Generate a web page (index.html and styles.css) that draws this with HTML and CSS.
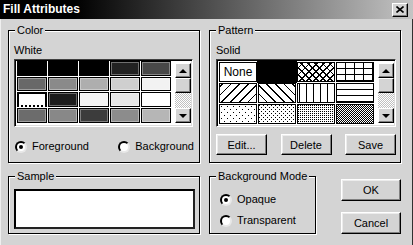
FILE: index.html
```html
<!DOCTYPE html>
<html lang="en">
<head>
    <meta charset="UTF-8">
    <meta name="viewport" content="width=device-width, initial-scale=1.0">
    <title>Fill Attributes</title>
    <link rel="stylesheet" href="styles.css">
</head>
<body>
    <div class="window">
        <div class="titlebar">
            <span class="title">Fill Attributes</span>
            <div class="close">
                <svg width="8" height="7" viewBox="0 0 8 7"><path d="M0.5 0.5 L7.5 6.5 M7.5 0.5 L0.5 6.5" stroke="#000" stroke-width="1.6" fill="none"/></svg>
            </div>
        </div>
        <div class="dialog">
            <div class="group color-group">
                <span class="group-title">Color</span>
                <div class="caption">White</div>
                <div class="listbox color-list">
                    <div class="swatches">
                        <div class="swatch dark" style="background:#000"></div>
                        <div class="swatch dark" style="background:#000"></div>
                        <div class="swatch dark" style="background:#000"></div>
                        <div class="swatch" style="background:#222"></div>
                        <div class="swatch" style="background:#484848"></div>
                        <div class="swatch" style="background:#686868"></div>
                        <div class="swatch" style="background:#8a8a8a"></div>
                        <div class="swatch" style="background:#aeaeae"></div>
                        <div class="swatch" style="background:#cfcfcf"></div>
                        <div class="swatch" style="background:#f2f2f2"></div>
                        <div class="swatch selected" style="background:#fff"></div>
                        <div class="swatch" style="background:#1c1c1c"></div>
                        <div class="swatch" style="background:#f4f4f4"></div>
                        <div class="swatch" style="background:#e6e6e6"></div>
                        <div class="swatch" style="background:#fff"></div>
                        <div class="swatch" style="background:#6c6c6c"></div>
                        <div class="swatch" style="background:#888"></div>
                        <div class="swatch" style="background:#3c3c3c"></div>
                        <div class="swatch" style="background:#8c8c8c"></div>
                        <div class="swatch" style="background:#b6b6b6"></div>
                    </div>
                    <div class="scrollbar">
                        <div class="sb-btn"><span class="arrow-up"></span></div>
                        <div class="sb-thumb"></div>
                        <div class="sb-track"></div>
                        <div class="sb-btn"><span class="arrow-down"></span></div>
                    </div>
                </div>
                <div class="radio-row">
                    <label class="radio"><span class="dot checked"></span>Foreground</label>
                    <label class="radio"><span class="dot"></span>Background</label>
                </div>
            </div>

            <div class="group pattern-group">
                <span class="group-title">Pattern</span>
                <div class="caption">Solid</div>
                <div class="listbox pattern-list">
                    <div class="patterns">
                        <div class="pat none">None</div>
                        <div class="pat solid"></div>
                        <div class="pat diamond"></div>
                        <div class="pat grid"></div>
                        <div class="pat fdiag"></div>
                        <div class="pat bdiag"></div>
                        <div class="pat vert"></div>
                        <div class="pat horiz"></div>
                        <div class="pat dots-sparse"></div>
                        <div class="pat dots-medium"></div>
                        <div class="pat dots-dense"></div>
                        <div class="pat checker"></div>
                    </div>
                    <div class="scrollbar">
                        <div class="sb-btn"><span class="arrow-up"></span></div>
                        <div class="sb-thumb"></div>
                        <div class="sb-track"></div>
                        <div class="sb-btn"><span class="arrow-down"></span></div>
                    </div>
                </div>
                <div class="pattern-buttons">
                    <button class="btn">Edit...</button>
                    <button class="btn">Delete</button>
                    <button class="btn">Save</button>
                </div>
            </div>

            <div class="group sample-group">
                <span class="group-title">Sample</span>
                <div class="sample-box"></div>
            </div>

            <div class="bottom-right">
                <div class="group mode-group">
                    <span class="group-title">Background Mode</span>
                    <label class="radio"><span class="dot checked"></span>Opaque</label>
                    <label class="radio"><span class="dot"></span>Transparent</label>
                </div>
                <div class="actions">
                    <button class="btn wide">OK</button>
                    <button class="btn wide">Cancel</button>
                </div>
            </div>
        </div>
    </div>
</body>
</html>
```

FILE: styles.css
```css
body {
    margin: 0;
    font-family: "Liberation Sans", Arial, sans-serif;
    font-size: 11px;
    line-height: 13px;
    color: #000;
}

.window {
    width: 413px;
    height: 245px;
    background-color: #d4d4d4;
    box-sizing: border-box;
    box-shadow: inset -1px 0 0 #303030, inset 1px 0 0 #efefef;
}

/* title bar */
.titlebar {
    height: 19px;
    display: flex;
    align-items: center;
    justify-content: space-between;
    padding: 0 5px 0 3px;
    background: linear-gradient(90deg, #000 0%, #000 18%, #c4c4c4 100%);
}

.title {
    color: #fff;
    font-weight: bold;
    font-size: 12px;
}

.close {
    width: 16px;
    height: 14px;
    box-sizing: border-box;
    background-color: #d4d4d4;
    border: 1px solid;
    border-color: #fff #000 #000 #fff;
    box-shadow: inset -1px -1px 0 #808080;
    display: flex;
    align-items: center;
    justify-content: center;
}

/* main layout */
.dialog {
    display: grid;
    grid-template-columns: 192px 193px;
    grid-template-rows: 133px 58px;
    column-gap: 8px;
    row-gap: 13px;
    padding: 11px 0 0 8px;
}

.group {
    position: relative;
    box-sizing: border-box;
    border: 1px solid #000;
    box-shadow: inset 1px 1px 0 #fff, 1px 1px 0 #fff;
}

.group-title {
    position: absolute;
    top: -7px;
    left: 6px;
    padding: 0 2px;
    background-color: #d4d4d4;
}

.caption {
    height: 13px;
}

.color-group {
    padding: 13px 0 0 5px;
}

.pattern-group {
    margin-left: 1px;
    padding: 13px 0 0 6px;
}

/* list boxes */
.listbox {
    box-sizing: border-box;
    height: 68px;
    margin-top: 2px;
    display: flex;
    background-color: #fff;
    border: 1px solid;
    border-color: #404040 #fff #fff #404040;
    box-shadow: inset 1px 1px 0 #000, inset -1px -1px 0 #dcdcdc;
    padding: 1px 1px 1px 2px;
}

.color-list {
    width: 179px;
}

.pattern-list {
    width: 180px;
}

.swatches {
    display: grid;
    grid-template-columns: repeat(5, 30px);
    grid-template-rows: 15px 14px 15px 15px;
    gap: 1px;
    align-content: start;
}

.swatch {
    box-sizing: border-box;
    border: 1px solid #000;
    box-shadow: inset 0 0 0 1px rgba(255, 255, 255, 0.35);
}

.swatch.dark {
    box-shadow: none;
}

.swatch.selected {
    border: 2px solid #000;
    border-bottom: 2px dotted #000;
    box-shadow: none;
}

.patterns {
    display: grid;
    grid-template-columns: repeat(4, 38px);
    grid-auto-rows: 20px;
    gap: 1px;
    padding-top: 1px;
    align-content: start;
}

.pat {
    box-sizing: border-box;
    border: 1px solid #000;
    background-color: #fff;
}

.pat.none {
    display: flex;
    align-items: center;
    justify-content: center;
    font-size: 12px;
}

.pat.solid {
    background-color: #000;
    outline: 1px solid #000;
}

.pat.diamond {
    background-image:
        repeating-linear-gradient(45deg, transparent 0 4px, #000 4px 5px),
        repeating-linear-gradient(-45deg, transparent 0 4px, #000 4px 5px);
}

.pat.grid {
    background-image:
        linear-gradient(90deg, transparent 8px, #000 8px),
        linear-gradient(transparent 5px, #000 5px);
    background-size: 9px 100%, 100% 6px;
    background-position: 0 0, 0 0;
}

.pat.fdiag {
    background-image: repeating-linear-gradient(-45deg, transparent 0 5px, #000 5px 6.2px);
}

.pat.bdiag {
    background-image: repeating-linear-gradient(45deg, transparent 0 5px, #000 5px 6.2px);
}

.pat.vert {
    background-image: linear-gradient(90deg, transparent 6px, #000 6px);
    background-size: 7px 100%;
    background-position: 2px 0;
}

.pat.horiz {
    background-image: linear-gradient(transparent 5px, #000 5px);
    background-size: 100% 6px;
}

.pat.dots-sparse {
    background-image:
        conic-gradient(at 1px 1px, transparent 75%, #000 0),
        conic-gradient(at 1px 1px, transparent 75%, #000 0);
    background-size: 6px 6px;
    background-position: 1px 1px, 4px 4px;
}

.pat.dots-medium {
    background-image:
        conic-gradient(at 1px 1px, transparent 75%, #000 0),
        conic-gradient(at 1px 1px, transparent 75%, #000 0);
    background-size: 4px 4px;
    background-position: 0 0, 2px 2px;
}

.pat.dots-dense {
    background-image: conic-gradient(at 1px 1px, transparent 75%, #000 0);
    background-size: 2px 2px;
}

.pat.checker {
    background-image: repeating-conic-gradient(#000 0 25%, #fff 0 50%);
    background-size: 2px 2px;
}

/* scroll bars */
.scrollbar {
    width: 16px;
    margin: 2px 0 0 auto;
    display: flex;
    flex-direction: column;
    height: 60px;
}

.sb-btn, .sb-thumb {
    box-sizing: border-box;
    height: 15px;
    background-color: #d4d4d4;
    border: 1px solid;
    border-color: #fff #000 #000 #fff;
    box-shadow: inset -1px -1px 0 #808080;
    display: flex;
    align-items: center;
    justify-content: center;
}

.sb-track {
    flex: 1;
    background-image: repeating-conic-gradient(#fff 0 25%, #c0c0c0 0 50%);
    background-size: 2px 2px;
}

.arrow-up {
    width: 0;
    height: 0;
    border-left: 4px solid transparent;
    border-right: 4px solid transparent;
    border-bottom: 4px solid #000;
}

.arrow-down {
    width: 0;
    height: 0;
    border-left: 4px solid transparent;
    border-right: 4px solid transparent;
    border-top: 4px solid #000;
}

/* radio buttons */
.radio-row {
    display: flex;
    justify-content: space-between;
    margin-top: 13px;
    padding: 0 5px 0 1px;
}

.radio {
    display: flex;
    align-items: center;
    gap: 5px;
}

.dot {
    box-sizing: border-box;
    width: 12px;
    height: 12px;
    border-radius: 50%;
    border: 2px solid;
    border-color: #000 #e8e8e8 #e8e8e8 #000;
    background-color: #fff;
    display: flex;
    align-items: center;
    justify-content: center;
}

.dot.checked::after {
    content: "";
    width: 4px;
    height: 4px;
    border-radius: 50%;
    background-color: #000;
}

/* buttons */
.btn {
    box-sizing: border-box;
    height: 21px;
    width: 51px;
    padding: 0;
    font-family: inherit;
    font-size: 11px;
    color: #000;
    background-color: #d4d4d4;
    border: 1px solid;
    border-color: #fff #000 #000 #fff;
    box-shadow: inset -1px -1px 0 #808080, inset 1px 1px 0 #ececec;
}

.btn.wide {
    width: 60px;
    height: 22px;
}

.pattern-buttons {
    display: flex;
    justify-content: space-between;
    width: 180px;
    margin-top: 7px;
}

/* bottom row */
.sample-group {
    padding: 12px 0 0 5px;
}

.sample-box {
    box-sizing: border-box;
    width: 181px;
    height: 40px;
    background-color: #fff;
    border: 2px solid #000;
    border-right-color: #222;
    border-bottom-color: #222;
}

.bottom-right {
    display: flex;
    justify-content: space-between;
}

.mode-group {
    width: 107px;
    margin-left: 1px;
    padding: 16px 0 0 10px;
    display: flex;
    flex-direction: column;
    gap: 8px;
}

.actions {
    display: flex;
    flex-direction: column;
    gap: 11px;
    padding-top: 3px;
}
```
